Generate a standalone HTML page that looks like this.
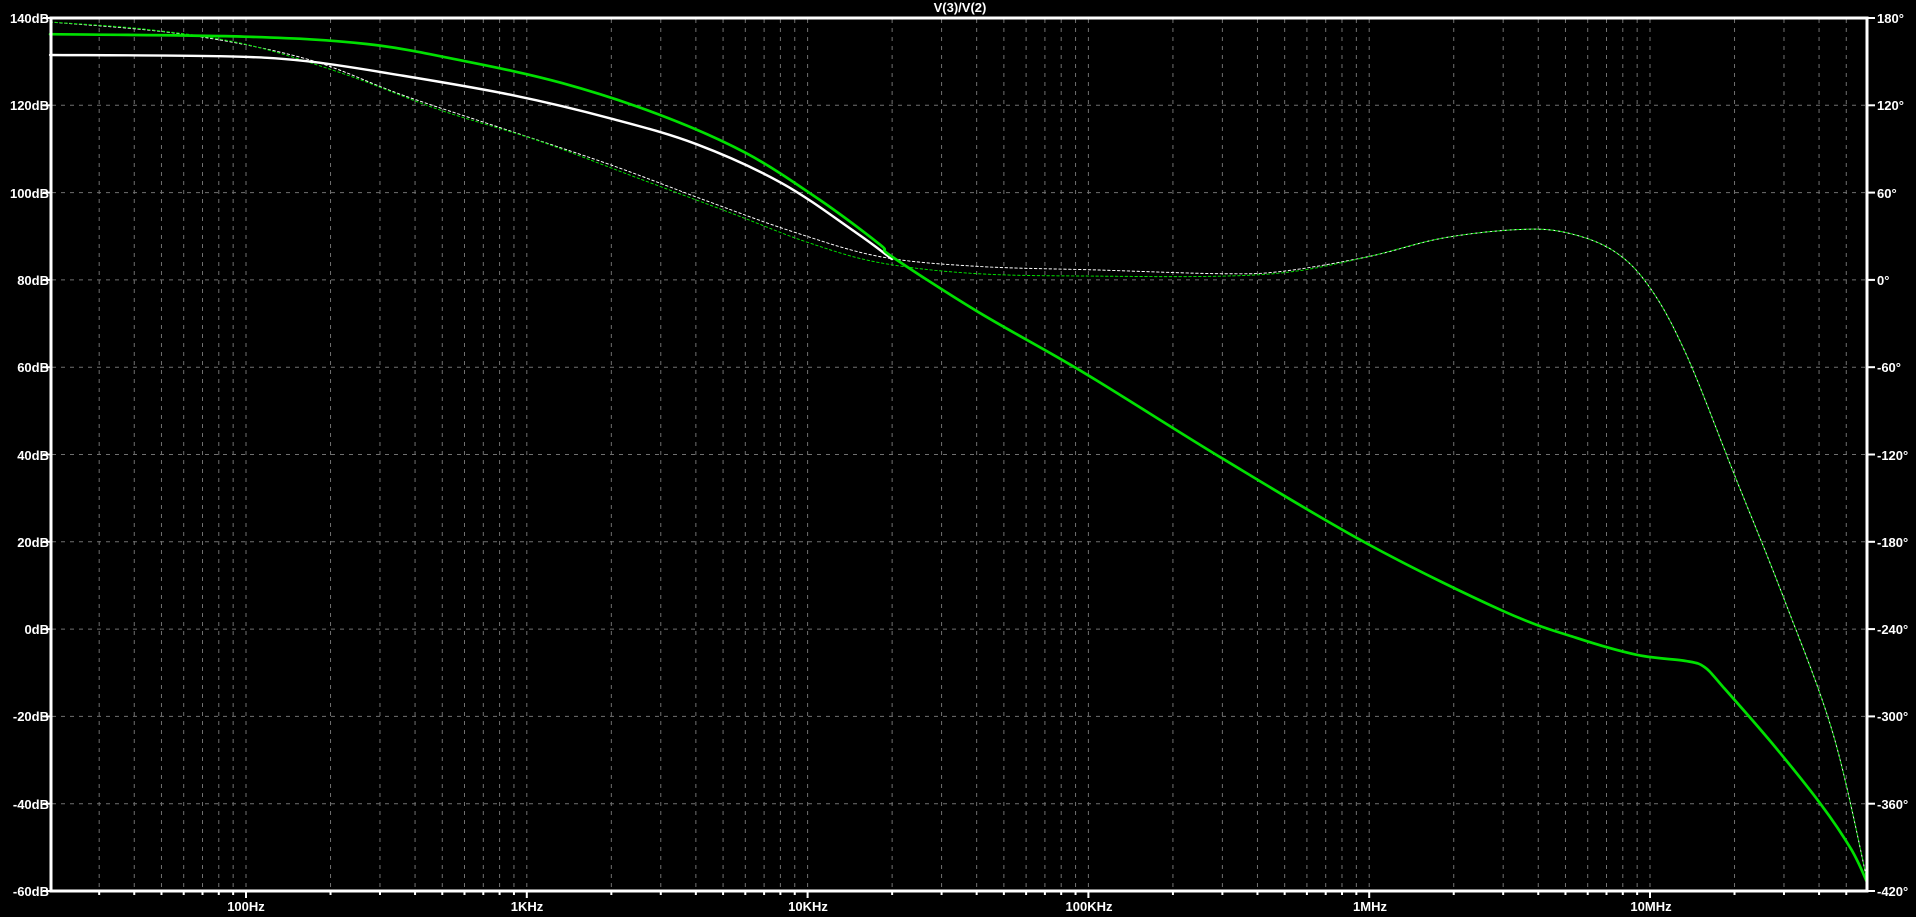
<!DOCTYPE html>
<html><head><meta charset="utf-8"><style>
html,body{margin:0;padding:0;background:#000;width:1916px;height:917px;overflow:hidden}
svg{display:block}
text{font-family:"Liberation Sans",sans-serif;font-size:13px;font-weight:bold;fill:#fff}
</style></head><body>
<svg id="s" width="1916" height="917" viewBox="0 0 1916 917" xmlns="http://www.w3.org/2000/svg">
<g id="grid"></g>
<g id="curves" transform="scale(1.2219)" fill="none" stroke-linejoin="round" stroke-linecap="round">
<polyline stroke="#fff" stroke-width="0.8" stroke-dasharray="2 2" points="41,18 150,28 250,48 330,78 420,108 500,135 580,165 650,190 720,210 800,218 900,221 1000,224 1050,222 1120,210 1180,195 1240,188 1280,190 1320,205 1350,235 1380,290 1420,390 1460,490 1500,600 1528,720"/>
<polyline stroke="#00e000" stroke-width="0.8" stroke-dasharray="2 2" points="41,18 120,24 200,36 280,60 360,90 440,115 520,145 600,175 660,198 720,215 800,224 900,226 1000,226 1060,222 1120,210 1180,195 1240,188 1280,190 1320,205 1350,235 1380,290 1420,390 1460,490 1500,600 1528,720"/>
<polyline stroke="#fff" stroke-width="2" points="41,45 180,46 250,50 330,62 420,78 500,97 570,118 640,150 700,190 730,212"/>
<polyline stroke="#00e000" stroke-width="2.2" points="41,28 200,30 300,36 380,50 460,68 540,94 610,125 670,163 720,200 730,210 800,255 887,305 1000,375 1119,445 1230,500 1290,522 1340,536 1380,541 1395,546 1410,562 1450,608 1490,658 1515,695 1528,722"/>
</g>
<g stroke="#fff" stroke-width="3" fill="none">
<rect x="51" y="18" width="1816" height="873"/>
</g>
<g id="ticks" stroke="#fff" stroke-width="2"></g>
<text x="960" y="12" text-anchor="middle">V(3)/V(2)</text>
<g text-anchor="end">
<text x="49" y="23">140dB</text><text x="49" y="110">120dB</text><text x="49" y="198">100dB</text>
<text x="49" y="285">80dB</text><text x="49" y="372">60dB</text><text x="49" y="460">40dB</text>
<text x="49" y="547">20dB</text><text x="49" y="634">0dB</text><text x="49" y="721">-20dB</text>
<text x="49" y="809">-40dB</text><text x="49" y="896">-60dB</text>
</g>
<g>
<text x="1877" y="23">180°</text><text x="1877" y="110">120°</text><text x="1877" y="198">60°</text>
<text x="1877" y="285">0°</text><text x="1877" y="372">-60°</text><text x="1877" y="460">-120°</text>
<text x="1877" y="547">-180°</text><text x="1877" y="634">-240°</text><text x="1877" y="721">-300°</text>
<text x="1877" y="809">-360°</text><text x="1877" y="896">-420°</text>
</g>
<g text-anchor="middle">
<text x="246" y="911">100Hz</text><text x="527" y="911">1KHz</text><text x="808" y="911">10KHz</text>
<text x="1089" y="911">100KHz</text><text x="1370" y="911">1MHz</text><text x="1651" y="911">10MHz</text>
</g>
</svg>
<script>
var ns="http://www.w3.org/2000/svg",g=document.getElementById("grid"),t=document.getElementById("ticks");
function L(p,a){var e=document.createElementNS(ns,"line");for(var k in a)e.setAttribute(k,a[k]);p.appendChild(e);}
var d=280.8,x0=246-d*2;
for(var dec=0;dec<8;dec++){for(var m=1;m<10;m++){var x=x0+d*dec+d*Math.log10(m);if(x<=52||x>=1866)continue;
L(g,{x1:x,y1:19,x2:x,y2:890,stroke:"#707070","stroke-width":1,"stroke-dasharray":"4 5"});
L(t,{x1:x,y1:891,x2:x,y2:m==1?898:895});}}
for(var i=1;i<10;i++){var y=18+87.3*i;L(g,{x1:52,y1:y,x2:1866,y2:y,stroke:"#707070","stroke-width":1,"stroke-dasharray":"4 5"});}
for(var i=0;i<=10;i++){var y=18+87.3*i;L(t,{x1:43,y1:y,x2:51,y2:y});L(t,{x1:1867,y1:y,x2:1875,y2:y});}
// smooth polylines with Catmull-Rom
document.querySelectorAll("#curves polyline").forEach(function(pl){
var p=pl.getAttribute("points").trim().split(/\s+/).map(function(s){return s.split(",").map(Number);});
var dd="M"+p[0][0]+","+p[0][1];
for(var i=0;i<p.length-1;i++){var a=p[i-1]||p[i],b=p[i],c=p[i+1],e=p[i+2]||c;
dd+=" C"+(b[0]+(c[0]-a[0])/6)+","+(b[1]+(c[1]-a[1])/6)+" "+(c[0]-(e[0]-b[0])/6)+","+(c[1]-(e[1]-b[1])/6)+" "+c[0]+","+c[1];}
var path=document.createElementNS(ns,"path");path.setAttribute("d",dd);
["stroke","stroke-width","stroke-dasharray"].forEach(function(k){if(pl.getAttribute(k))path.setAttribute(k,pl.getAttribute(k));});
pl.parentNode.replaceChild(path,pl);});
</script>
</body></html>
